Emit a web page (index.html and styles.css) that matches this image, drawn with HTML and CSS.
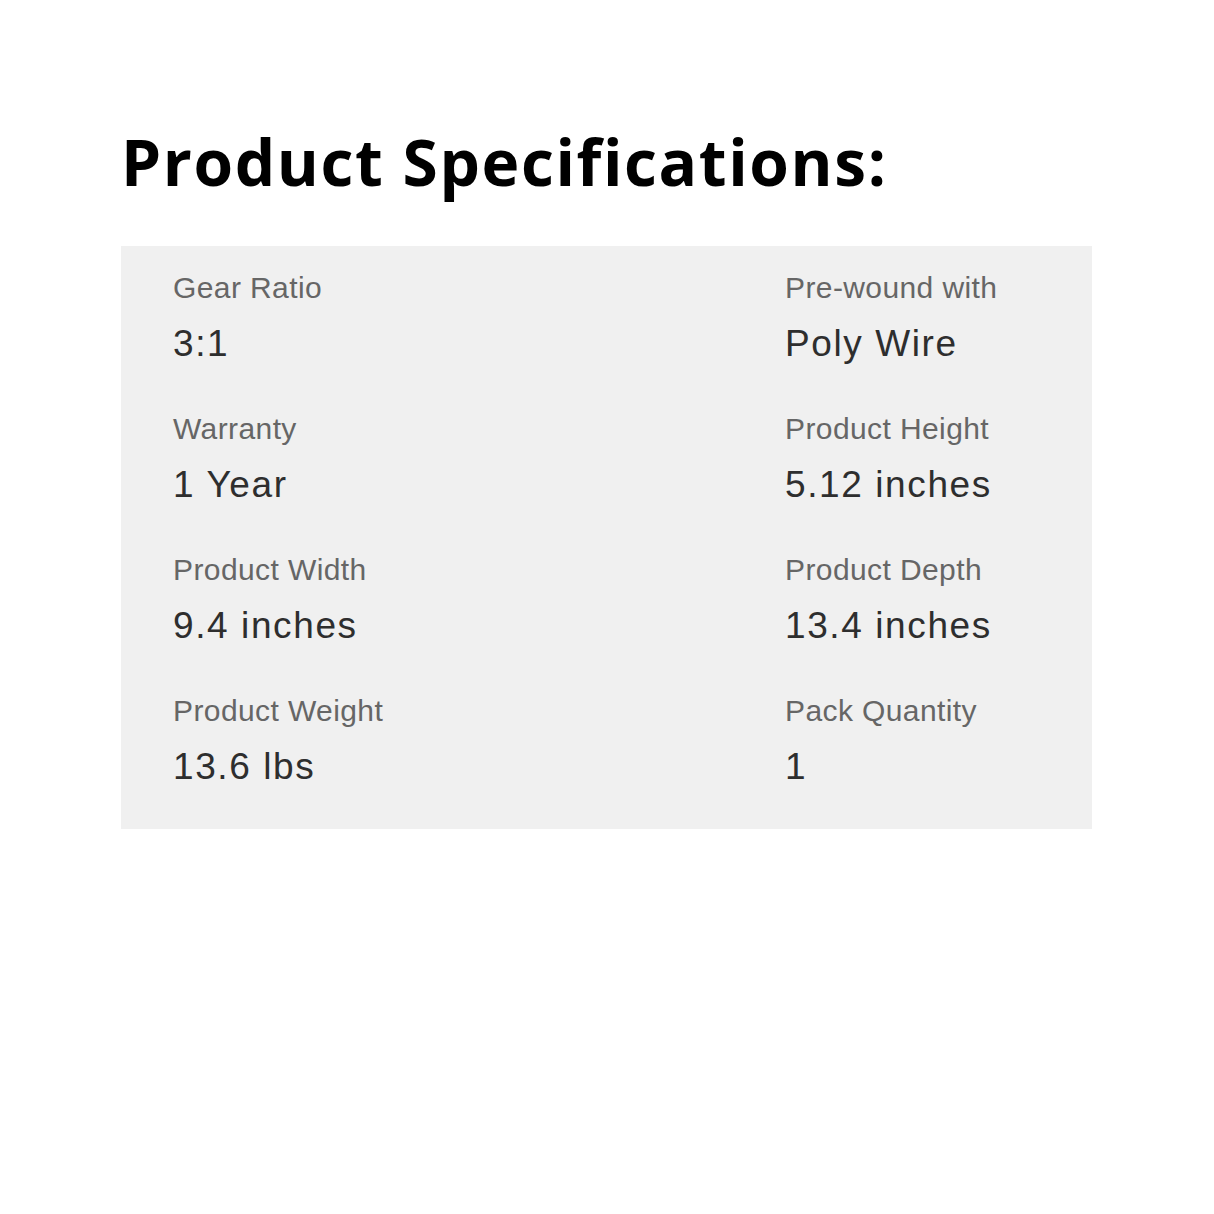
FILE: index.html
```html
<!DOCTYPE html>
<html lang="en">
<head>
<meta charset="utf-8">
<title>Product Specifications</title>
<link rel="stylesheet" href="styles.css">
</head>
<body>
<main class="page">
  <h1 class="title">Product Specifications:</h1>
  <section class="specs">
    <div class="spec"><div class="label">Gear Ratio</div><div class="value">3:1</div></div>
    <div class="spec"><div class="label">Pre-wound with</div><div class="value">Poly Wire</div></div>
    <div class="spec"><div class="label">Warranty</div><div class="value">1 Year</div></div>
    <div class="spec"><div class="label">Product Height</div><div class="value">5.12 inches</div></div>
    <div class="spec"><div class="label">Product Width</div><div class="value">9.4 inches</div></div>
    <div class="spec"><div class="label">Product Depth</div><div class="value">13.4 inches</div></div>
    <div class="spec"><div class="label">Product Weight</div><div class="value">13.6 lbs</div></div>
    <div class="spec"><div class="label">Pack Quantity</div><div class="value">1</div></div>
  </section>
</main>
</body>
</html>
```

FILE: styles.css
```css
html, body {
  margin: 0;
  padding: 0;
  background: #ffffff;
}

.page {
  padding: 130px 0 0 121px;
}

.title {
  margin: 0 0 52px 0;
  font-family: "Open Sans", "Noto Sans", sans-serif;
  font-weight: 700;
  font-size: 64px;
  line-height: 64px;
  color: #000000;
  letter-spacing: 1.6px;
}

.specs {
  width: 971px;
  box-sizing: border-box;
  background: #f0f0f0;
  padding: 24px 0 40px 52px;
  display: grid;
  grid-template-columns: 612px 1fr;
  row-gap: 45px;
}

.label {
  font-family: "Liberation Sans", Arial, sans-serif;
  font-size: 30px;
  line-height: 36px;
  color: #666666;
  margin-bottom: 16px;
  letter-spacing: 0.4px;
}

.value {
  font-family: "Liberation Sans", Arial, sans-serif;
  font-size: 37px;
  line-height: 44px;
  color: #2e2e2e;
  letter-spacing: 1.6px;
}
```
